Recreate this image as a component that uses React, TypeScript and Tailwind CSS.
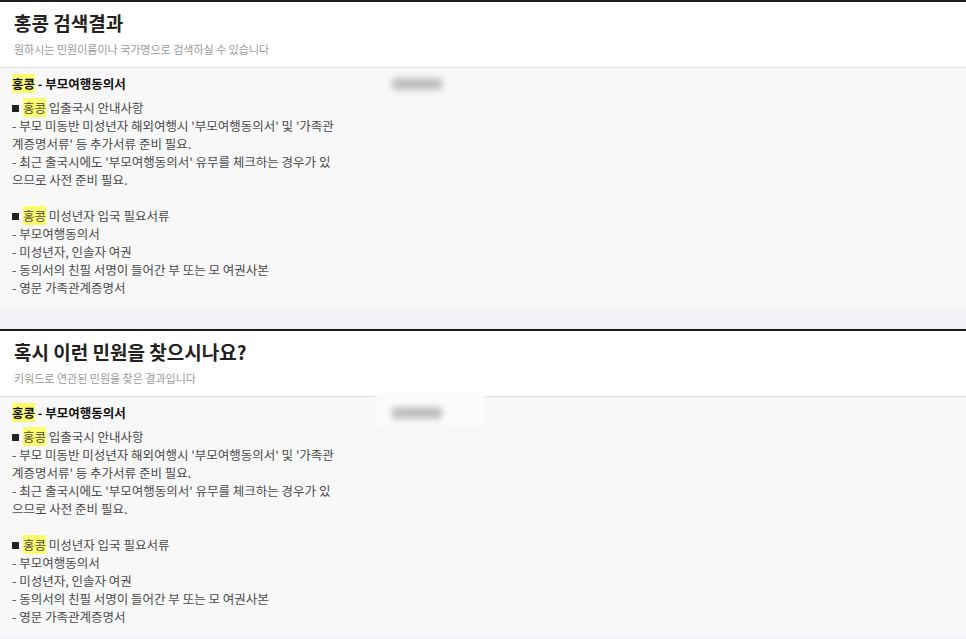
import React from "react";

const font = { fontFamily: '"Noto Sans CJK KR", "Noto Sans", sans-serif' };

const Hl = ({ children }: { children: React.ReactNode }) => (
  <span className="bg-[#fcfc6c]">{children}</span>
);

const Square = () => <span className="inline-block h-[7px] w-[7px] bg-[#222] align-[1px] mr-[4px]" />;

const ResultItem = ({ blurBox }: { blurBox?: boolean }) => (
  <div className="relative bg-[#f8f8f8] px-3 pt-[7px] pb-[10px]">
    {blurBox && (
      <div className="absolute left-[375px] top-[-4px] h-[34px] w-[110px] bg-[#fbfbfb] blur-[2px]" />
    )}
    <div className="relative flex items-center h-[18px]">
      <div className="w-[380px] text-[12.5px] font-bold text-[#111]">
        <Hl>홍콩</Hl> - 부모여행동의서
      </div>
      <div className="h-[12px] w-[50px] rounded bg-[#bfbfbf] blur-[3px]" />
    </div>
    <div className="mt-[6px] text-[12.5px] leading-[18px] text-[#4a4a4a]">
      <p className="h-[18px]">
        <Square />
        <Hl>홍콩</Hl> 입출국시 안내사항
      </p>
      <p>
        - 부모 미동반 미성년자 해외여행시 '부모여행동의서' 및 '가족관
        <br />
        계증명서류' 등 추가서류 준비 필요.
      </p>
      <p>
        - 최근 출국시에도 '부모여행동의서' 유무를 체크하는 경우가 있
        <br />
        으므로 사전 준비 필요.
      </p>
      <p className="h-[18px]" />
      <p className="h-[18px]">
        <Square />
        <Hl>홍콩</Hl> 미성년자 입국 필요서류
      </p>
      <p>- 부모여행동의서</p>
      <p>- 미성년자, 인솔자 여권</p>
      <p>- 동의서의 친필 서명이 들어간 부 또는 모 여권사본</p>
      <p>- 영문 가족관계증명서</p>
    </div>
  </div>
);

const Section = ({ title, sub, blurBox }: { title: string; sub: string; blurBox?: boolean }) => (
  <section className="border-t-2 border-[#1e1e1e]">
    <div className="bg-white px-[14px] pt-[8px] pb-[11px] border-b border-[#dedede]">
      <h2 className="text-[19px] leading-[26px] font-bold text-[#222]">{title}</h2>
      <p className="mt-[6px] text-[11px] leading-[14px] text-[#9a9a9a]">{sub}</p>
    </div>
    <ResultItem blurBox={blurBox} />
  </section>
);

export default function App() {
  return (
    <div className="min-h-[639px] w-[966px] bg-[#f2f3f6]" style={font}>
      <Section title="홍콩 검색결과" sub="원하시는 민원이름이나 국가명으로 검색하실 수 있습니다" />
      <div className="h-[22px]" />
      <Section title="혹시 이런 민원을 찾으시나요?" sub="키워드로 연관된 민원을 찾은 결과입니다" blurBox />
    </div>
  );
}
